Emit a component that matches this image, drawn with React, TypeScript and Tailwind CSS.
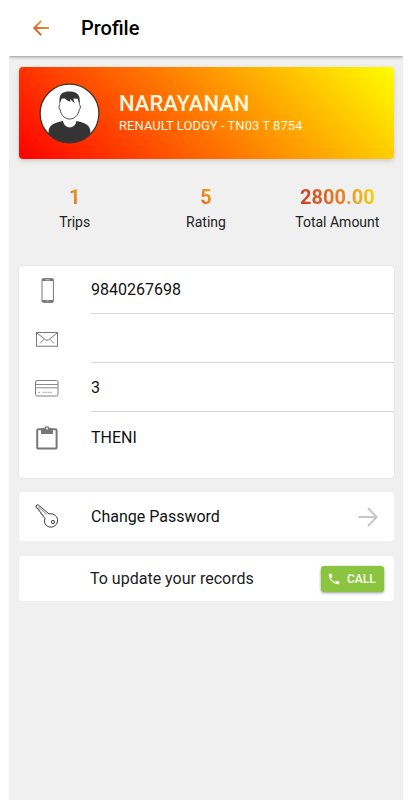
import type { ReactNode } from 'react';

function BackArrow() {
  return (
    <svg className="block h-4 w-4" viewBox="0 0 16 16" fill="none">
      <defs>
        <linearGradient id="back" gradientUnits="userSpaceOnUse" x1="1" y1="15" x2="15" y2="1">
          <stop offset="0" stopColor="#cf4a1f" />
          <stop offset="1" stopColor="#f2ab2b" />
        </linearGradient>
      </defs>
      <path d="M8.2 0.9 1.2 8 8.2 15.1M1.2 8H16" stroke="url(#back)" strokeWidth="1.8" />
    </svg>
  );
}

function Avatar() {
  return (
    <svg className="block h-[61px] w-[61px]" viewBox="0 0 61 61">
      <defs>
        <clipPath id="face">
          <circle cx="30.5" cy="30.5" r="29.5" />
        </clipPath>
      </defs>
      <circle cx="30.5" cy="30.5" r="29.5" fill="#fff" />
      <g clipPath="url(#face)">
        <path
          d="M9.5 61V50C9.500 42.500 13.500 40 24 38C25.500 46.500 36 46.500 37.500 38C47.500 40 51.500 42.500 51.500 50V61Z"
          fill="#343434"
        />
        <path
          d="M21 21.500C19.600 22.500 19.800 26 21.200 26.800C22 32.500 26 36 30.600 36C35.200 36 39.400 32.500 40.200 26.800C41.600 26 41.800 22.500 40.400 21.500"
          fill="#fff"
          stroke="#343434"
          strokeWidth="0.9"
        />
        <path
          d="M20.800 22.500C19.600 14 21.200 9.500 26.500 8.900C31 7.800 40.300 8.300 40.700 16C41 18.500 40.800 20.500 40.500 22.500C40 20.500 39.400 17.500 38.500 15.800L34.500 15.500C34.500 17 35 18.500 35.800 20C33.800 19 32.200 17.500 31.300 15.800C31 16.800 31.200 17.800 31.600 18.800C29 18 26.800 16.700 25.500 15.200L22.700 15.700C21.500 17.500 21.200 20 20.800 22.500Z"
          fill="#343434"
        />
      </g>
      <circle cx="30.5" cy="30.5" r="29.4" fill="none" stroke="#45322b" strokeWidth="1.3" />
    </svg>
  );
}

function PhoneIcon() {
  return (
    <svg className="block h-[25px] w-[13px]" viewBox="0 0 13 25" fill="none">
      <rect x="1" y="0.6" width="11.4" height="23.8" rx="1.3" stroke="#777" />
      <path d="M1.200 2H12.200M1.200 23H12.200" stroke="#777" strokeWidth="2" />
      <path d="M4.500 1.800H8.500M5.500 23H7.500" stroke="#ddd" strokeWidth="0.8" />
    </svg>
  );
}

function MailIcon() {
  return (
    <svg className="block h-[15px] w-[22px]" viewBox="0 0 22 15" fill="none" stroke="#777">
      <rect x="0.5" y="0.5" width="21" height="13.700" />
      <path d="M1 1 9.500 7.800Q11 9 12.500 7.800L21 1" />
      <path d="M4 11.500 8 7.200M18 11.500 14 7.200" strokeWidth="0.9" />
    </svg>
  );
}

function CardIcon() {
  return (
    <svg className="block h-[17px] w-[24px]" viewBox="0 0 24 17" fill="none" stroke="#808080">
      <rect x="0.500" y="0.500" width="22.500" height="15.500" rx="1.500" />
      <path d="M0.500 4.500H23M0.500 7.800H23" strokeWidth="0.9" />
      <path d="M3 12.300H5M7.500 12.300H17" stroke="#999" strokeWidth="0.9" strokeDasharray="2 0.600" />
    </svg>
  );
}

function ClipboardIcon() {
  return (
    <svg className="block h-[25px] w-[22px]" viewBox="0 0 22 25" fill="none">
      <rect x="1.200" y="4.200" width="19.400" height="19.400" rx="1.200" stroke="#777" strokeWidth="2" />
      <path d="M5 3.500H8.200A2.900 2.900 0 0 1 13.800 3.500H17V9H5Z" fill="#777" />
      <circle cx="11" cy="3.500" r="1" fill="#fff" />
    </svg>
  );
}

function KeyIcon() {
  return (
    <svg className="block h-[25px] w-[24px]" viewBox="0 0 24 25" fill="none" stroke="#222" strokeWidth="0.900">
      <path d="M3.600 1.200 14 9.900C19 9 23 12.500 22.600 17C22 22.500 15.500 25 11.500 21.500C9.500 19.500 9 17 10 14.300L8.300 12.500 7.800 10.800 6.200 10 5.700 8 4.200 7 4 5.400 1.300 3.800 0.900 1.900 2.200 0.800Z" />
      <path d="M3 2.600 12 10.600" strokeWidth="0.500" />
      <circle cx="18" cy="18" r="1.600" />
    </svg>
  );
}

function Stat({ value, label, className }: { value: string; label: string; className: string }) {
  return (
    <div className="flex w-[132px] flex-col items-center">
      <span className={`bg-clip-text text-[20px] leading-[26px] font-bold text-transparent ${className}`}>{value}</span>
      <span className="text-[14px] leading-6 text-[#222]">{label}</span>
    </div>
  );
}

function Row({ icon, text, first, last }: { icon: ReactNode; text: string; first?: boolean; last?: boolean }) {
  return (
    <div className={`flex ${first ? 'h-12' : 'h-[49px]'}`}>
      <div className={`flex w-14 items-center justify-center ${first ? '' : 'pt-0.5'}`}>{icon}</div>
      <div
        className={`ml-4 flex flex-1 items-center text-base text-[#111] ${first ? 'pt-px' : 'pt-0.5'} ${last ? '' : 'border-b border-[#d6d6d6]'}`}
      >
        {text}
      </div>
    </div>
  );
}

export default function App() {
  return (
    <div className="flex h-[800px] w-[412px] flex-col overflow-hidden bg-white pr-[9px] pl-[9px] font-['Roboto',sans-serif] text-black">
      <header className="z-10 flex h-14 shrink-0 items-center bg-white pl-6 shadow-[0_1px_3px_rgba(0,0,0,0.400)] [clip-path:inset(0_0_-6px_0)]">
        <BackArrow />
        <h1 className="ml-8 text-[20px] font-medium">Profile</h1>
      </header>
      <main className="flex-1 bg-[#f0f0f0] pt-[11px] pr-[9px] pl-[10px]">
        <section className="flex h-[92px] items-center rounded bg-[linear-gradient(45deg,#ff0000,#ffff00)] pl-5 shadow-[0_2px_5px_rgba(0,0,0,0.150)]">
          <Avatar />
          <div className="ml-[19px] text-[#fff8e0]">
            <h2 className="text-[22px] leading-[26px] font-medium">NARAYANAN</h2>
            <p className="text-[13px] leading-[18px] tracking-[0.03px]">RENAULT LODGY - TN03 T 8754</p>
          </div>
        </section>

        <section className="-mr-[9px] -ml-[10px] flex h-[107px] justify-between pt-[25px]">
          <Stat value="1" label="Trips" className="bg-[linear-gradient(60deg,#e25a28,#eab12b)]" />
          <Stat value="5" label="Rating" className="bg-[linear-gradient(60deg,#d94a28,#f0c21b)]" />
          <Stat value="2800.00" label="Total Amount" className="bg-[linear-gradient(80deg,#c43c28,#e8892a_60%,#f3dc10)]" />
        </section>

        <section className="h-[212px] rounded bg-white shadow-[0_0_2px_rgba(0,0,0,0.120)]">
          <Row icon={<PhoneIcon />} text="9840267698" first />
          <Row icon={<MailIcon />} text="" />
          <Row icon={<CardIcon />} text="3" />
          <Row icon={<ClipboardIcon />} text="THENI" last />
        </section>

        <section className="mt-[14px] flex h-[49px] items-center rounded bg-white pr-4">
          <div className="flex w-14 justify-center">
            <KeyIcon />
          </div>
          <span className="ml-4 flex-1 text-base text-[#111]">Change Password</span>
          <svg className="h-5 w-5" viewBox="0 0 20 20" fill="none" stroke="#c6c6c6" strokeWidth="2">
            <path d="M0.500 10H18.500M10 1 18.700 10 10 19" />
          </svg>
        </section>

        <section className="mt-[15px] flex h-[45px] items-center rounded bg-white pr-[10px] pl-[71px]">
          <span className="flex-1 text-base text-[#222]">To update your records</span>
          <button className="flex h-[26px] w-[63px] items-center rounded-[3px] bg-[#8bc540] pl-[6px] text-[12px] font-medium text-[#fafff0] shadow-[0_1px_3px_rgba(0,0,0,0.400)]">
            <svg className="h-[14px] w-[14px]" viewBox="0 0 24 24" fill="currentColor">
              <path d="M6.620 10.790c1.440 2.830 3.760 5.140 6.590 6.590l2.200-2.200c.27-.27.67-.36 1.020-.24 1.120.37 2.330.57 3.570.57.55 0 1 .45 1 1V20c0 .55-.45 1-1 1C10.610 21 3 13.390 3 4c0-.55.45-1 1-1h3.500c.55 0 1 .45 1 1 0 1.250.2 2.450.57 3.570.11.35.03.74-.25 1.020l-2.200 2.200z" />
            </svg>
            <span className="ml-[6px]">CALL</span>
          </button>
        </section>
      </main>
    </div>
  );
}
